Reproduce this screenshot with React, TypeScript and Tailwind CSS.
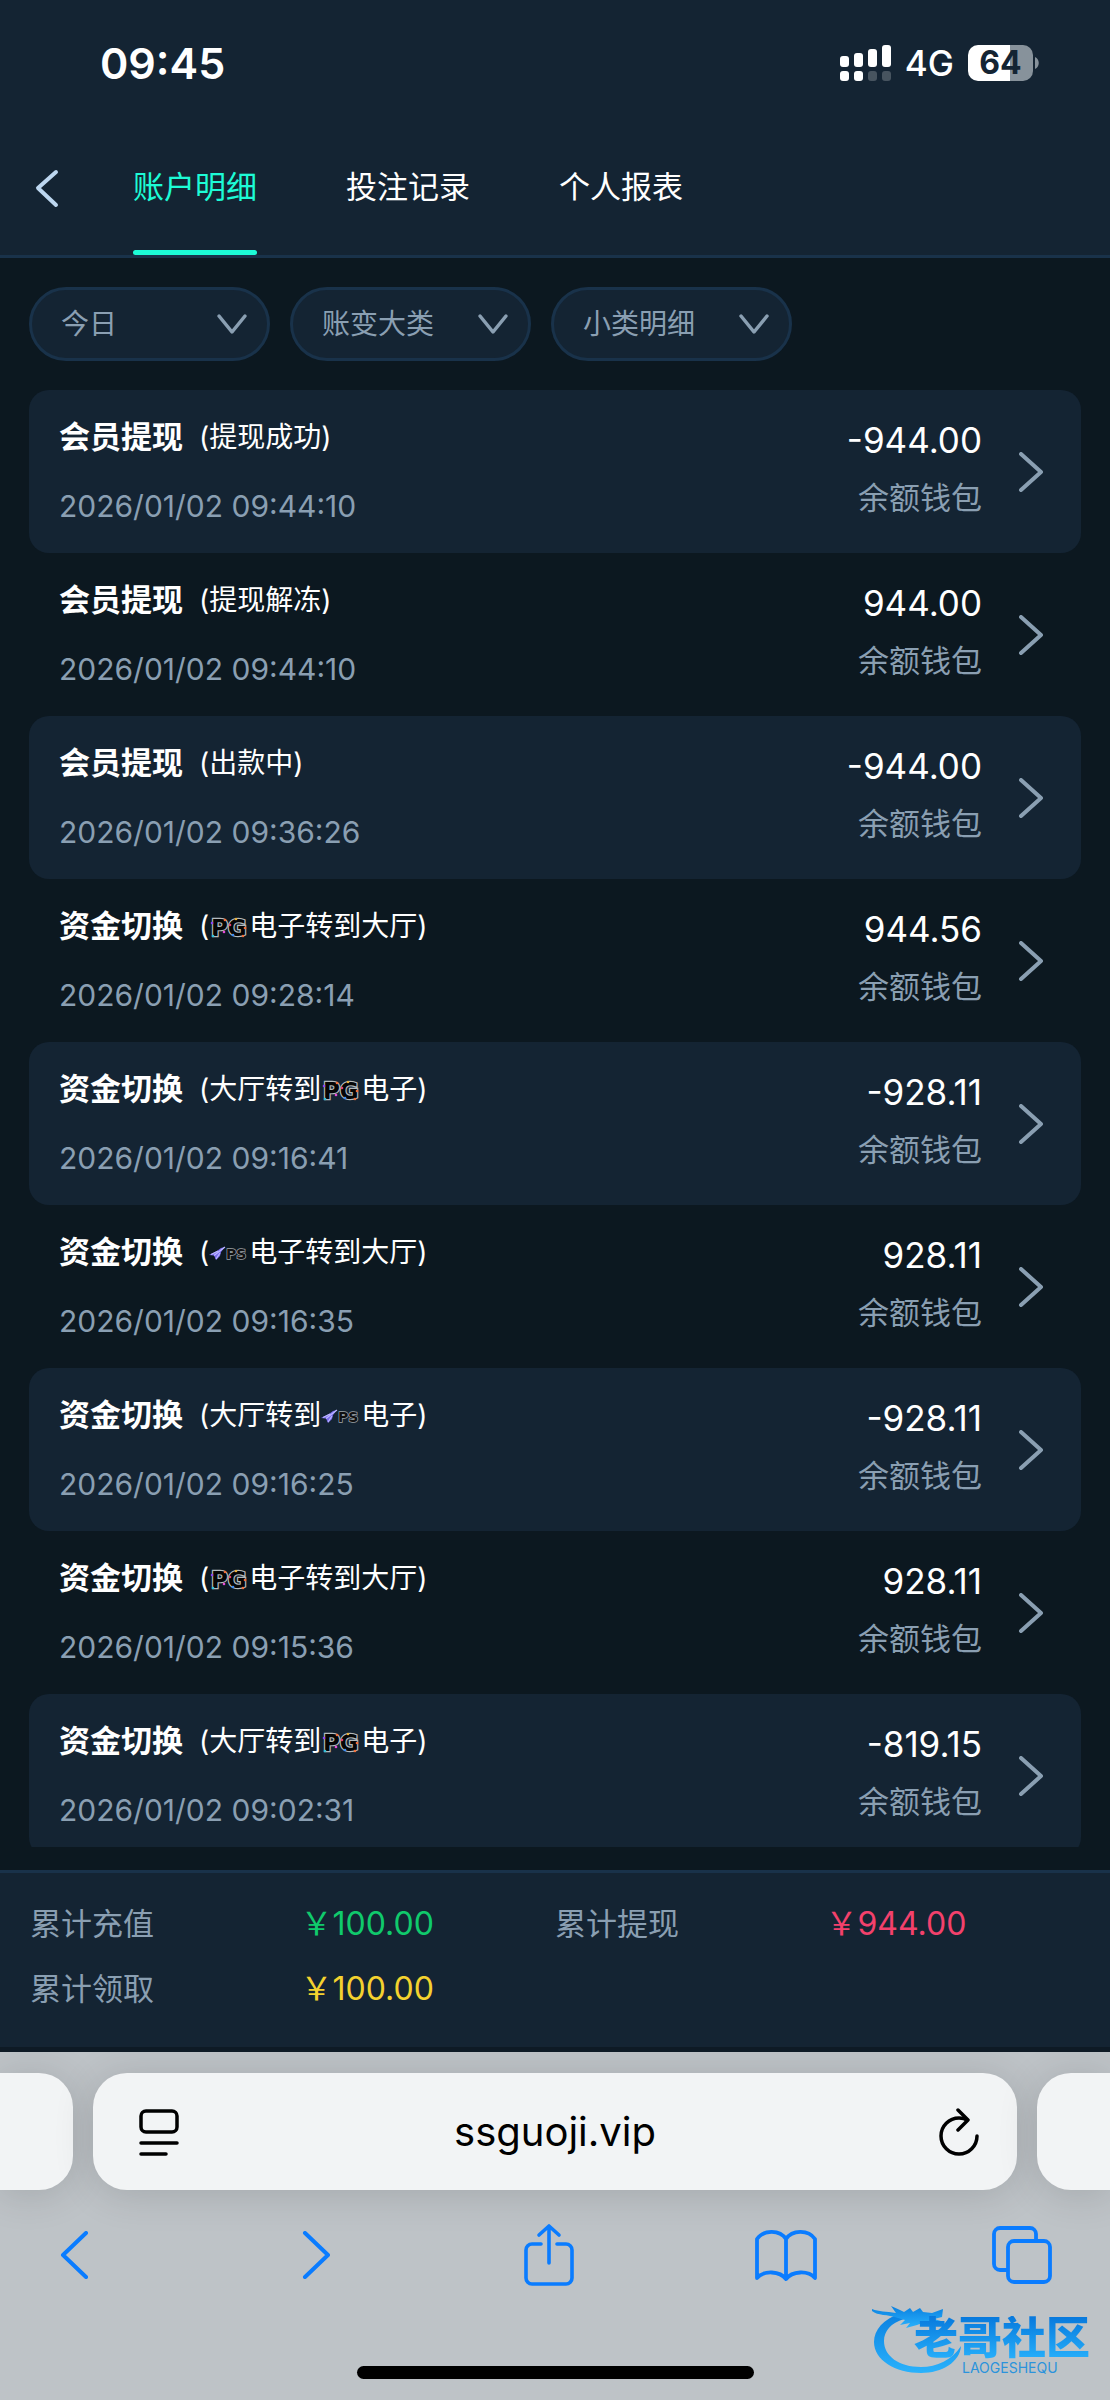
import { useState } from 'react';
import clsx from 'clsx';

type Brand = 'PG' | 'PS';

interface LogEntry {
    id: number;
    title: string;
    note: string;
    brand?: Brand;
    noteEnd?: string;
    time: string;
    amount: string;
}

const TABS = ['账户明细', '投注记录', '个人报表'];

const FILTERS = [
    { label: '日期', options: ['今日', '昨日', '近7日'] },
    { label: '大类', options: ['账变大类', '会员提现', '资金切换'] },
    { label: '小类', options: ['小类明细', '提现成功', '出款中'] },
];

const ENTRIES: LogEntry[] = [
    { id: 1, title: '会员提现', note: '提现成功', time: '2026/01/02 09:44:10', amount: '-944.00' },
    { id: 2, title: '会员提现', note: '提现解冻', time: '2026/01/02 09:44:10', amount: '944.00' },
    { id: 3, title: '会员提现', note: '出款中', time: '2026/01/02 09:36:26', amount: '-944.00' },
    { id: 4, title: '资金切换', note: '', brand: 'PG', noteEnd: '电子转到大厅', time: '2026/01/02 09:28:14', amount: '944.56' },
    { id: 5, title: '资金切换', note: '大厅转到', brand: 'PG', noteEnd: '电子', time: '2026/01/02 09:16:41', amount: '-928.11' },
    { id: 6, title: '资金切换', note: '', brand: 'PS', noteEnd: '电子转到大厅', time: '2026/01/02 09:16:35', amount: '928.11' },
    { id: 7, title: '资金切换', note: '大厅转到', brand: 'PS', noteEnd: '电子', time: '2026/01/02 09:16:25', amount: '-928.11' },
    { id: 8, title: '资金切换', note: '', brand: 'PG', noteEnd: '电子转到大厅', time: '2026/01/02 09:15:36', amount: '928.11' },
    { id: 9, title: '资金切换', note: '大厅转到', brand: 'PG', noteEnd: '电子', time: '2026/01/02 09:02:31', amount: '-819.15' },
];

const TOTALS = [
    { label: '累计充值', value: '￥100.00', color: 'text-[#10ca6c]' },
    { label: '累计提现', value: '￥944.00', color: 'text-[#f3416c]' },
    { label: '累计领取', value: '￥100.00', color: 'text-[#f4d22f]' },
];

function StatusBar() {
    return (
        <div className="flex h-30 items-center justify-between pt-1.5 pr-[71px] pl-[100px] text-white">
            <span className="text-[43px] leading-none font-semibold">09:45</span>
            <div className="flex items-center gap-3.5">
                <svg className="h-9 w-[51px]" viewBox="0 0 51 36" fill="#fff">
                    <rect x="0" y="11" width="9" height="11" rx="3" />
                    <rect x="14" y="8" width="9" height="14" rx="3" />
                    <rect x="28" y="4" width="9" height="18" rx="3" />
                    <rect x="42" y="0" width="9" height="22" rx="3" />
                    <rect x="0" y="26" width="9" height="10" rx="3" />
                    <rect x="14" y="26" width="9" height="10" rx="3" />
                    <rect x="28" y="26" width="9" height="10" rx="3" opacity="0.22" />
                    <rect x="42" y="26" width="9" height="10" rx="3" opacity="0.22" />
                </svg>
                <span className="text-[35px] leading-9 font-medium">4G</span>
                <div className="flex items-center gap-0.5">
                    <span className="flex h-9 w-[65px] items-center justify-center rounded-[10px] bg-linear-to-r from-white from-64% to-[#87929b] to-64% text-[32px] leading-none font-bold text-[#142433]">
                        64
                    </span>
                    <svg className="h-3 w-1" viewBox="0 0 4 12" fill="#87929b">
                        <path d="M0 0c5 2 5 10 0 12z" />
                    </svg>
                </div>
            </div>
        </div>
    );
}

function BrandLogo({ brand }: { brand: Brand }) {
    if (brand === 'PG') {
        return (
            <svg className="inline-block h-8 w-10 overflow-visible align-[-8px]" viewBox="0 0 40 32">
                <text
                    x="2"
                    y="24"
                    className="font-['DejaVu_Sans'] text-[23px] font-bold"
                    fill="#050505"
                    stroke="#b4babe"
                    strokeWidth="2.4"
                    paintOrder="stroke"
                >
                    PG
                </text>
                {/* neon sparks along the outline */}
                <circle cx="3" cy="11" r="1.300" fill="#8b46f2" />
                <circle cx="4" cy="24" r="1.300" fill="#35c3d6" />
                <circle cx="15" cy="20" r="1.300" fill="#e24bd8" />
                <circle cx="16" cy="8" r="1.300" fill="#f0703c" />
                <circle cx="21" cy="13" r="1.300" fill="#e23f6c" />
                <circle cx="24" cy="23" r="1.300" fill="#3f8df2" />
                <circle cx="27" cy="7" r="1.300" fill="#e8b13c" />
                <circle cx="36" cy="16" r="1.300" fill="#f0703c" />
                <circle cx="34" cy="24" r="1.300" fill="#f0703c" />
            </svg>
        );
    }
    return (
        <svg className="inline-block h-8 w-10 overflow-visible align-[-8px]" viewBox="0 0 40 32">
            <path d="M16 9 L12 10 L8 13 L0 17 L5 17.500 L7 22 L11 18 L12 14 Z" fill="#7a6cf0" />
            <path d="M16 9 L5 17.500 M2 16.500 L9 13 M7 21 L11 15" stroke="#bdb8ff" strokeWidth="1.200" fill="none" />
            <text
                x="17"
                y="21"
                className="font-['DejaVu_Sans'] text-[14px] font-bold"
                fill="#111"
                stroke="#9ea4a9"
                strokeWidth="1.400"
                paintOrder="stroke"
            >
                PS
            </text>
        </svg>
    );
}

function EntryRow({ entry, shaded }: { entry: LogEntry; shaded: boolean }) {
    return (
        <li>
            <button
                className={clsx(
                    'flex w-full items-center rounded-[20px] py-[25px] pr-9 pl-[30px] text-left',
                    shaded && 'bg-[#142433]'
                )}
            >
                <span className="flex flex-1 flex-col gap-[25px] leading-[44px]">
                    <span className="flex items-center gap-4 text-white">
                        <strong className="text-[31px] font-bold">{entry.title}</strong>
                        <span className="text-[28px]">
                            ({entry.note}
                            {entry.brand && <BrandLogo brand={entry.brand} />}
                            {entry.noteEnd})
                        </span>
                    </span>
                    <time className="text-[30px] text-[#8a9fb2]">{entry.time}</time>
                </span>
                <span className="mr-[35px] flex flex-col items-end gap-3.5 pb-1.5 leading-[44px]">
                    <span className="text-[35px] text-white">{entry.amount}</span>
                    <span className="text-[31px] text-[#8a9fb2]">余额钱包</span>
                </span>
                <svg className="h-10 w-7" viewBox="0 0 28 40" fill="none" stroke="#8a9fb2" strokeWidth="4" strokeLinecap="round" strokeLinejoin="round">
                    <path d="M4 2 L24 20 L4 38" />
                </svg>
            </button>
        </li>
    );
}

function CommunityLogo() {
    return (
        <div className="pointer-events-none absolute right-4 bottom-6 h-[72px] w-[224px]">
            <svg className="absolute inset-0 h-full w-full" viewBox="0 0 224 72">
                <defs>
                    <linearGradient id="dragon" x1="0" y1="0" x2="0" y2="1">
                        <stop offset="0" stopColor="#0a80e0" />
                        <stop offset="1" stopColor="#2ab2fc" />
                    </linearGradient>
                </defs>
                <g fill="url(#dragon)">
                    <path d="M31 9 C13 15 4 26 4 38 C4 56 25 69 51 69 C72 69 90 58 91 42 C82 56 67 63 51 63 C29 63 14 52 14 37 C14 27 21 19 34 15 Z" />
                    <path d="M2 5 C9 8 16 7 26 9 L21 2 L30 6 L34 8 L40 4 L43 8 L50 4 L53 8 L62 9 L73 5 L72 13 L64 15 L71 17 L69 22 L55 18 L47 21 L36 24 L40 19 L30 21 L35 16 L28 14 C17 10 8 12 2 7 Z" />
                </g>
            </svg>
            <div className="relative flex flex-col pt-3 pl-11">
                <span className="bg-linear-to-b from-[#0878dc] to-[#27b0fb] bg-clip-text text-[44px] leading-[44px] font-black text-transparent">
                    老哥社区
                </span>
                <span className="pl-12 text-[14px] leading-4 text-[#2b93dc]">LAOGESHEQU</span>
            </div>
        </div>
    );
}

function BrowserBar() {
    const card = 'h-[117px] bg-[#f2f4f5] shadow-[0_4px_40px_rgba(0,0,0,0.14)]';
    const tool = 'flex w-16 justify-center';
    return (
        <footer className="relative flex flex-col overflow-hidden border-t-[5px] border-[#0e1a25] bg-[#bec3c7]">
            <div className="flex gap-5 pt-[21px]">
                <div className={clsx(card, 'w-[73px] rounded-r-[34px]')} />
                <div className={clsx(card, 'flex flex-1 items-center rounded-[34px] pr-[30px] pl-[38px]')}>
                    <button aria-label="页面菜单" className="p-2">
                        <svg className="h-12 w-10" viewBox="0 0 40 48" fill="none" stroke="#000" strokeWidth="3.500" strokeLinecap="round">
                            <rect x="2" y="3" width="36" height="21" rx="5" />
                            <path d="M2 35H38M2 46H27" />
                        </svg>
                    </button>
                    <input
                        aria-label="地址"
                        defaultValue="ssguoji.vip"
                        className="min-w-0 flex-1 bg-transparent pr-2 text-center text-[40px] text-black outline-none"
                    />
                    <button aria-label="刷新" className="p-2">
                        <svg className="h-12 w-10" viewBox="0 0 40 48" fill="none" stroke="#000" strokeWidth="3.500" strokeLinecap="round" strokeLinejoin="round">
                            <path d="M38 28 A18 18 0 1 1 20 10 C23 10 26 10.500 28 12" />
                            <path d="M19 2 L29 12 L19 22" />
                        </svg>
                    </button>
                </div>
                <div className={clsx(card, 'w-[73px] rounded-l-[34px]')} />
            </div>
            <nav className="flex h-32 items-center justify-between pt-0.5 pr-14 pl-11 text-[#0a7cff]">
                <button aria-label="后退" className={tool}>
                    <svg className="h-12 w-[34px]" viewBox="0 0 34 48" fill="none" stroke="currentColor" strokeWidth="4" strokeLinecap="round" strokeLinejoin="round">
                        <path d="M27 2 L4 24 L27 46" />
                    </svg>
                </button>
                <button aria-label="前进" className={tool}>
                    <svg className="h-12 w-[34px]" viewBox="0 0 34 48" fill="none" stroke="currentColor" strokeWidth="4" strokeLinecap="round" strokeLinejoin="round">
                        <path d="M9 2 L32 24 L9 46" />
                    </svg>
                </button>
                <button aria-label="分享" className={tool}>
                    <svg className="h-16 w-[50px]" viewBox="0 0 50 64" fill="none" stroke="currentColor" strokeWidth="3.600" strokeLinecap="round" strokeLinejoin="round">
                        <path d="M17 21 H8 A6 6 0 0 0 2 27 V55 A6 6 0 0 0 8 61 H42 A6 6 0 0 0 48 55 V27 A6 6 0 0 0 42 21 H33" />
                        <path d="M25 40 V3 M15 12 L25 3 L35 12" />
                    </svg>
                </button>
                <button aria-label="书签" className={tool}>
                    <svg className="h-[54px] w-[62px]" viewBox="0 0 62 54" fill="none" stroke="currentColor" strokeWidth="3.800" strokeLinecap="round" strokeLinejoin="round">
                        <path d="M31 11 C25 2 9 1 2 11 V50 C9 42 25 43 31 51 C37 43 53 42 60 50 V11 C53 1 37 2 31 11 V51" />
                    </svg>
                </button>
                <button aria-label="标签页" className={tool}>
                    <svg className="h-[58px] w-[60px]" viewBox="0 0 60 58" fill="none" stroke="currentColor" strokeWidth="3.800" strokeLinejoin="round">
                        <rect x="16" y="15" width="42" height="41" rx="6" />
                        <path d="M44 15 V8 A6 6 0 0 0 38 2 H8 A6 6 0 0 0 2 8 V38 A6 6 0 0 0 8 44 H16" />
                    </svg>
                </button>
            </nav>
            <div className="mt-12 mb-[21px] h-[13px] w-[397px] self-center rounded-full bg-black" />
            <CommunityLogo />
        </footer>
    );
}

function App() {
    const [activeTab, setActiveTab] = useState(TABS[0]);

    return (
        <div className="flex h-screen flex-col bg-[#0c1820] font-['Inter','Noto_Sans_CJK_SC',sans-serif]">
            <header className="border-b-[3px] border-[#19324a] bg-[#142433]">
                <StatusBar />
                <nav className="flex h-[135px] items-stretch pl-8">
                    <button aria-label="返回" className="w-[101px]">
                        <svg className="h-10 w-8" viewBox="0 0 32 40" fill="none" stroke="#bdd7f0" strokeWidth="4" strokeLinecap="round" strokeLinejoin="round">
                            <path d="M24 4 L6 20 L24 37" />
                        </svg>
                    </button>
                    <div className="flex gap-[89px]">
                        {TABS.map((tab) => (
                            <button
                                key={tab}
                                onClick={() => setActiveTab(tab)}
                                className={clsx(
                                    'flex flex-col items-stretch text-[31px]',
                                    tab === activeTab ? 'text-[#1dfbd6]' : 'text-white'
                                )}
                            >
                                <span className="flex flex-1 items-center pt-[5px]">{tab}</span>
                                <span className={clsx('h-[5px] rounded-full', tab === activeTab && 'bg-[#1dfbd6]')} />
                            </button>
                        ))}
                    </div>
                </nav>
            </header>

            <div className="flex gap-5 px-[29px] py-[29px]">
                {FILTERS.map((filter) => (
                    <div key={filter.label} className="relative w-[241px]">
                        <select
                            aria-label={filter.label}
                            className="h-[74px] w-full appearance-none rounded-full border-[3px] border-[#19324a] bg-[#142433] pr-14 pl-[29px] text-[28px] text-[#8a9fb2]"
                        >
                            {filter.options.map((option) => (
                                <option key={option}>{option}</option>
                            ))}
                        </select>
                        <svg
                            className="pointer-events-none absolute top-[26px] right-[22px] h-[22px] w-8"
                            viewBox="0 0 32 22"
                            fill="none"
                            stroke="#8a9fb2"
                            strokeWidth="3.500"
                            strokeLinecap="round"
                            strokeLinejoin="round"
                        >
                            <path d="M3 3 L16 19 L29 3" />
                        </svg>
                    </div>
                ))}
            </div>

            <main className="mb-[23px] min-h-0 flex-1 overflow-y-auto px-[29px] [scrollbar-width:none]">
                <ul>
                    {ENTRIES.map((entry, i) => (
                        <EntryRow key={entry.id} entry={entry} shaded={i % 2 === 0} />
                    ))}
                </ul>
            </main>

            <dl className="grid grid-cols-2 gap-y-5 border-t-[3px] border-[#19324a] bg-[#142433] px-[30px] pt-7 pb-9 text-[31px] leading-[45px]">
                {TOTALS.map((total) => (
                    <div key={total.label} className="grid grid-cols-2">
                        <dt className="text-[#8a9fb2]">{total.label}</dt>
                        <dd className={clsx('pl-2 text-[32px]', total.color)}>{total.value}</dd>
                    </div>
                ))}
            </dl>

            <BrowserBar />
        </div>
    );
}

export default App;
